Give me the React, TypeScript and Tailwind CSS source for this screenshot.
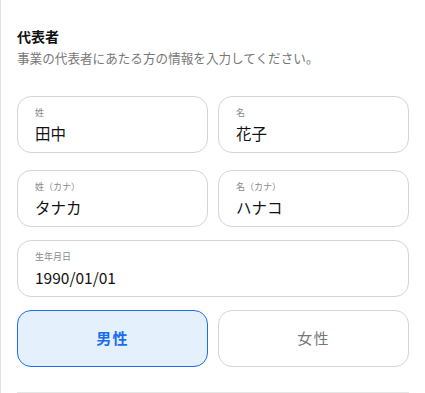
import { useState } from "react";

type Field = { label: string; value: string };

const NAME_ROWS: Field[][] = [
  [
    { label: "姓", value: "田中" },
    { label: "名", value: "花子" },
  ],
  [
    { label: "姓（カナ）", value: "タナカ" },
    { label: "名（カナ）", value: "ハナコ" },
  ],
];

function FieldBox({ label, value }: Field) {
  return (
    <div className="flex h-[57px] flex-col rounded-[14px] border border-[#d4d4d4] bg-white px-[17px] pt-[10px]">
      <span className="text-[9px] leading-[12px] text-[#8a8a8a]">{label}</span>
      <span className="mt-[4px] text-[15.5px] leading-[20px] text-[#111]">{value}</span>
    </div>
  );
}

export default function App() {
  const [gender, setGender] = useState<"male" | "female">("male");

  return (
    <div
      className="min-h-[393px] w-[425px] border-l border-[#e3e3e6] bg-white px-4 pt-[26px]"
      style={{ fontFamily: '"Noto Sans CJK JP", "Noto Sans", sans-serif' }}
    >
      <h2 className="text-[14px] font-bold leading-[20px] text-[#111]">代表者</h2>
      <p className="mt-[3px] text-[12.6px] leading-[18px] text-[#777]">
        事業の代表者にあたる方の情報を入力してください。
      </p>

      <div className="mt-[29px] flex flex-col">
        {NAME_ROWS.map((row, i) => (
          <div
            key={i}
            className={`grid grid-cols-2 gap-[10px] ${i > 0 ? "mt-[17px]" : ""}`}
          >
            {row.map((f) => (
              <FieldBox key={f.label} {...f} />
            ))}
          </div>
        ))}

        <div className="mt-[13px]">
          <FieldBox label="生年月日" value="1990/01/01" />
        </div>

        <div className="mt-[13px] grid grid-cols-2 gap-[10px]">
          <button
            type="button"
            onClick={() => setGender("male")}
            className={`flex h-[57px] items-center justify-center rounded-[14px] border text-[15px] tracking-[0.08em] ${
              gender === "male"
                ? "border-[#1a6cf0] bg-[#e5f0fd] font-bold text-[#1a6cf0]"
                : "border-[#d4d4d4] bg-white text-[#777]"
            }`}
          >
            男性
          </button>
          <button
            type="button"
            onClick={() => setGender("female")}
            className={`flex h-[57px] items-center justify-center rounded-[14px] border text-[15px] tracking-[0.08em] ${
              gender === "female"
                ? "border-[#1a6cf0] bg-[#e5f0fd] font-bold text-[#1a6cf0]"
                : "border-[#d4d4d4] bg-white text-[#777]"
            }`}
          >
            女性
          </button>
        </div>

        <div className="mt-[25px] h-px bg-[#e5e5e5]" />
      </div>
    </div>
  );
}
